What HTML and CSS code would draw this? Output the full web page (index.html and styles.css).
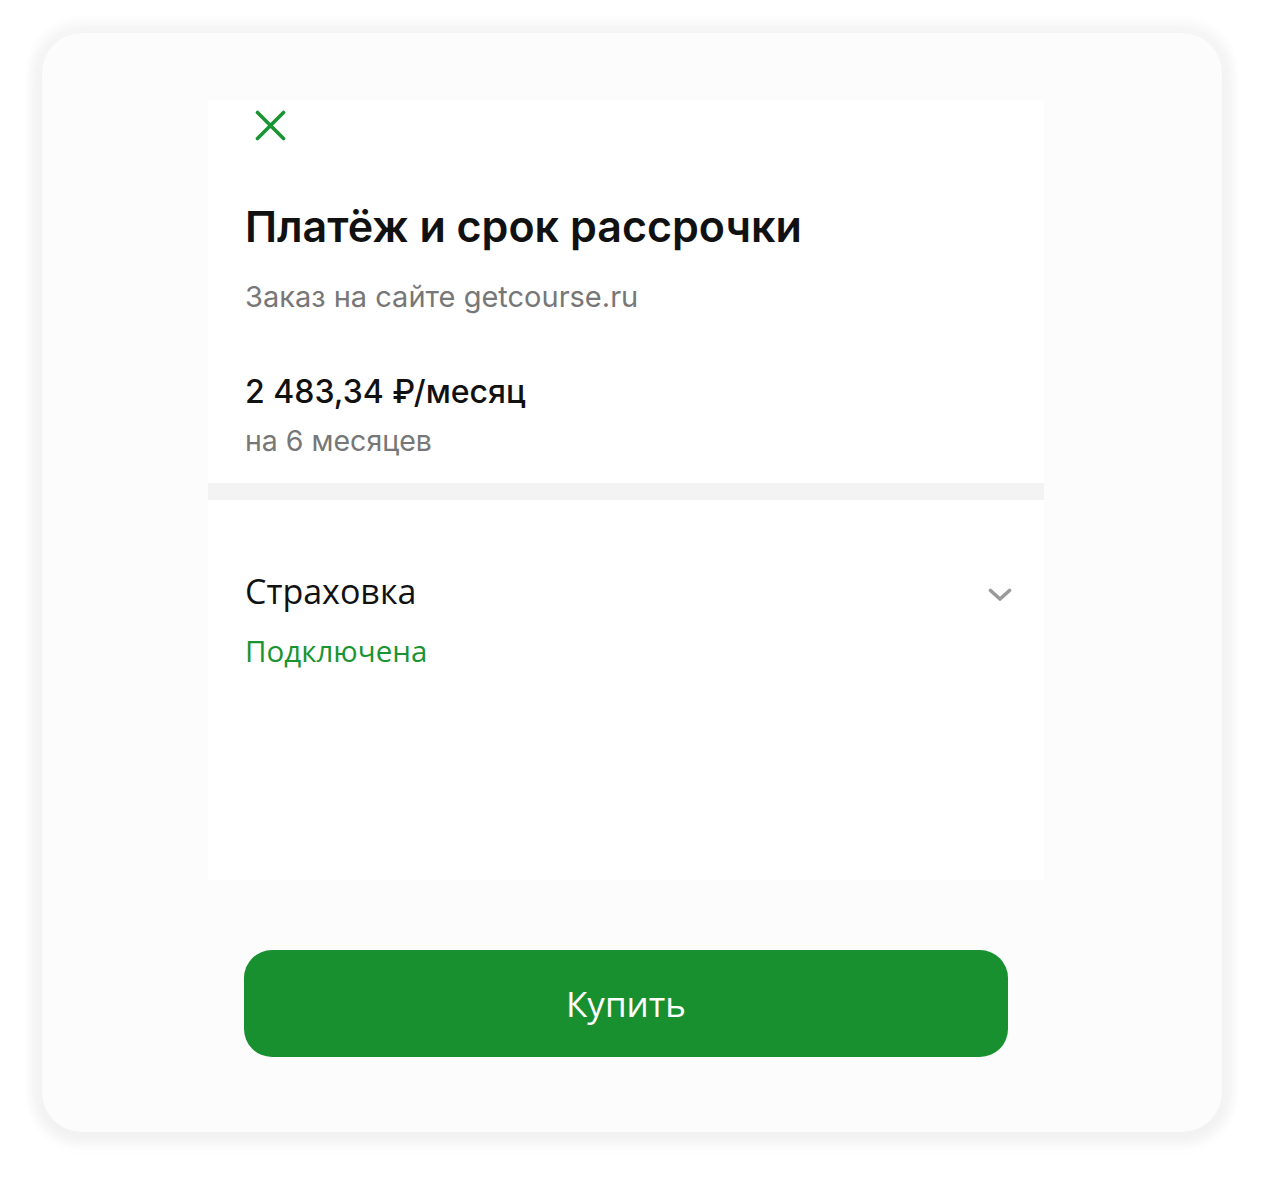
FILE: index.html
```html
<!DOCTYPE html>
<html lang="ru">
<head>
<meta charset="utf-8">
<link rel="stylesheet" href="styles.css">
</head>
<body>
<div class="card">
  <div class="panel">
    <div class="top">
      <button class="close" aria-label="Закрыть">
        <svg width="31" height="31" viewBox="0 0 31 31"><path d="M2.5 2.5 L28.5 28.5 M28.5 2.5 L2.5 28.5" stroke="#1a9432" stroke-width="3.6" stroke-linecap="round" fill="none"/></svg>
      </button>
      <h1 class="title">Платёж и срок рассрочки</h1>
      <p class="sub">Заказ на сайте getcourse.ru</p>
      <div class="price">2 483,34 ₽/месяц</div>
      <div class="term">на 6 месяцев</div>
    </div>
    <div class="divider"></div>
    <div class="ins">
      <div class="ins-row">
        <div class="ins-title">Страховка</div>
        <svg class="chev" width="24" height="14" viewBox="0 0 24 14"><path d="M2.5 2.5 L12 11 L21.5 2.5" stroke="#9a9a9a" stroke-width="3.6" stroke-linecap="round" stroke-linejoin="round" fill="none"/></svg>
      </div>
      <div class="ins-status">Подключена</div>
    </div>
  </div>
  <div class="footer">
    <button class="buy">Купить</button>
  </div>
</div>
</body>
</html>
```
FILE: styles.css
```css
* { box-sizing: border-box; }
html, body { margin: 0; padding: 0; background: #ffffff; }
body {
  font-family: "Open Sans", "Noto Sans", sans-serif;
  width: 1264px;
  height: 1182px;
  padding: 33px 42px 0 42px;
}
.card {
  width: 1180px;
  height: 1099px;
  background: #fcfcfc;
  border-radius: 40px;
  box-shadow: 0 0 10px 12px rgba(0,0,0,0.035), 0 8px 18px 6px rgba(0,0,0,0.025);
  padding: 67px 0 0 166px;
  display: flex;
  flex-direction: column;
  align-items: flex-start;
}
.panel {
  width: 836px;
  height: 780px;
  background: #ffffff;
}
.top { padding: 10px 36px 0 37px; height: 383px; }
.close {
  display: block;
  border: 0;
  background: none;
  padding: 0;
  margin-left: 10px;
  width: 31px;
  height: 31px;
  cursor: pointer;
}
.title {
  margin: 58px 0 0 0;
  font-family: "Inter", "Open Sans", sans-serif;
  font-size: 43px;
  font-weight: 600;
  color: #111;
  line-height: 54px;
}
.sub {
  margin: 25px 0 0 0;
  font-family: "Inter", "Open Sans", sans-serif;
  font-size: 29px;
  color: #777;
  line-height: 38px;
}
.price {
  margin-top: 56px;
  font-family: "Inter", "Open Sans", sans-serif;
  font-size: 32px;
  font-weight: 500;
  color: #111;
  line-height: 40px;
}
.term {
  margin-top: 10px;
  font-family: "Inter", "Open Sans", sans-serif;
  font-size: 28.5px;
  color: #777;
  line-height: 38px;
}
.divider { height: 17px; background: #f3f3f3; }
.ins { padding: 70px 32px 0 37px; }
.ins-row { display: flex; justify-content: space-between; align-items: center; height: 42px; }
.ins-title { font-size: 34px; color: #111; line-height: 42px; }
.chev { margin-top: 8px; }
.ins-status { margin-top: 20px; font-size: 29.5px; color: #1a9432; line-height: 38px; }
.footer { width: 836px; padding: 70px 36px 0 36px; }
.buy {
  display: block;
  width: 764px;
  height: 107px;
  border: 0;
  border-radius: 28px;
  background: #18902f;
  color: #fff;
  font-family: "Open Sans", "Noto Sans", sans-serif;
  font-size: 35px;
  font-weight: 500;
  cursor: pointer;
}
```
